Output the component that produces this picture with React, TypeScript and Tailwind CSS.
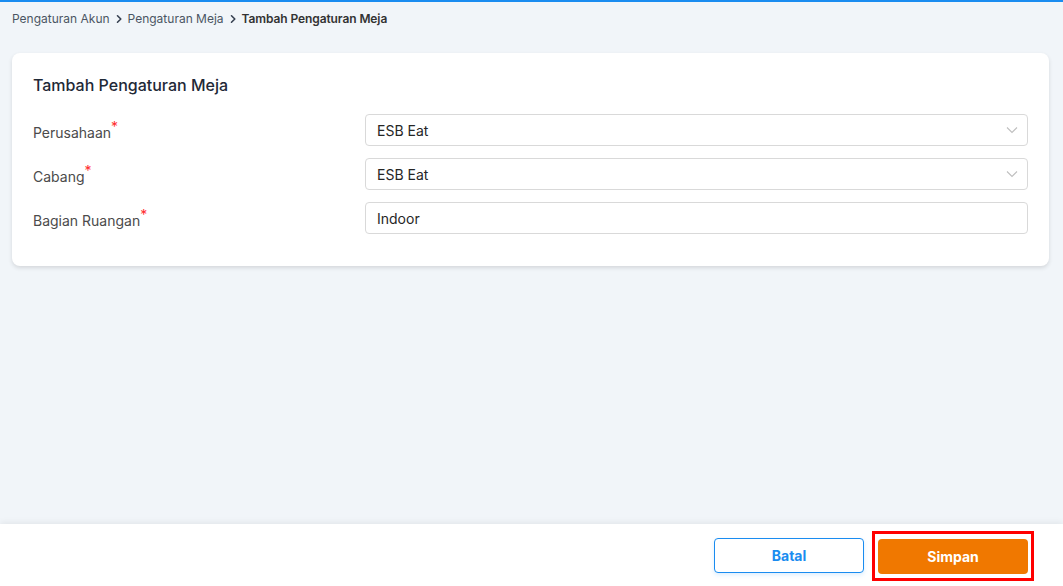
import React from "react";

const Chevron = () => (
  <svg width="10" height="10" viewBox="0 0 10 10" className="mx-[4px]">
    <path d="M3.5 1.8 L6.8 5 L3.5 8.2" fill="none" stroke="#374151" strokeWidth="1.6" strokeLinecap="round" strokeLinejoin="round" />
  </svg>
);

const Down = () => (
  <svg width="14" height="14" viewBox="0 0 14 14">
    <path d="M2 4.5 L7 9.5 L12 4.5" fill="none" stroke="#bfbfbf" strokeWidth="1.1" />
  </svg>
);

function Row({ label, value, select }: { label: string; value: string; select?: boolean }) {
  return (
    <div className="flex items-center h-[32px]">
      <div className="w-[332px] text-[14px] text-[#4b4b4b] pt-[4px]">
        {label}
        <span className="text-[#ff2d2d] relative top-[-6px] text-[14px]">*</span>
      </div>
      <div className="flex-1 h-[32px] border border-[#d9d9d9] rounded-[4px] bg-white flex items-center justify-between pl-[11px] pr-[8px] text-[14px] text-[#262626]">
        <span>{value}</span>
        {select && <Down />}
      </div>
    </div>
  );
}

export default function App() {
  return (
    <div
      className="w-[1063px] h-[586px] bg-[#f1f5f9] flex flex-col border-t-[2px] border-[#1a8cf0] overflow-hidden"
      style={{ fontFamily: "Inter, 'Noto Sans', sans-serif" }}
    >
      <div className="flex items-center h-[32px] pl-[12px] text-[12px] text-[#4b5563] mt-[1px]">
        <span>Pengaturan Akun</span>
        <Chevron />
        <span>Pengaturan Meja</span>
        <Chevron />
        <span className="font-semibold text-[#333] tracking-[-0.1px]">Tambah Pengaturan Meja</span>
      </div>
      <div className="flex-1 pl-[12px] pr-[14px] pt-[18px]">
        <div className="bg-white rounded-[8px] shadow-[0_2px_4px_rgba(0,0,0,0.12)] px-[21px] pt-[20px] pb-[32px]">
          <div className="text-[16px] font-medium text-[#1f2937] mb-[17px]">Tambah Pengaturan Meja</div>
          <div className="flex flex-col gap-[12px]">
            <Row label="Perusahaan" value="ESB Eat" select />
            <Row label="Cabang" value="ESB Eat" select />
            <Row label="Bagian Ruangan" value="Indoor" />
          </div>
        </div>
      </div>
      <div className="h-[62px] bg-white shadow-[0_-2px_6px_rgba(0,0,0,0.06)] flex items-center justify-end pr-[35px] gap-[14px]">
        <button className="w-[150px] h-[35px] rounded-[4px] border border-[#1a8cf0] text-[#1a8cf0] text-[14px] font-bold bg-white shadow-[0_2px_4px_rgba(26,140,240,0.15)]">
          Batal
        </button>
        <div className="border-[3px] border-[#ff0000] px-[3px] pt-[5px] pb-[4px] -mx-[6px] mt-[-1px] mb-[-3px]">
          <button className="w-[150px] h-[35px] rounded-[4px] bg-[#f07800] text-white text-[14px] font-bold block">
            Simpan
          </button>
        </div>
      </div>
    </div>
  );
}
